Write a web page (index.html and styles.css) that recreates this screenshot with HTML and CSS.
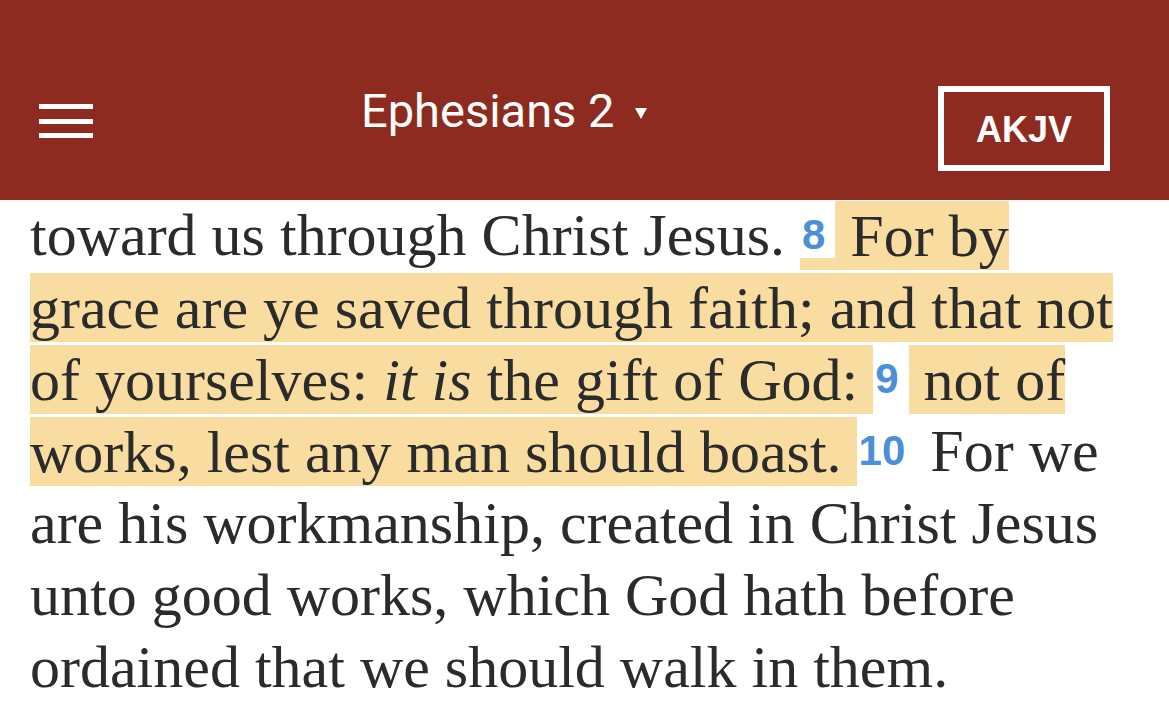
FILE: index.html
```html
<!DOCTYPE html>
<html>
<head>
<meta charset="utf-8">
<link rel="stylesheet" href="styles.css">
</head>
<body>
<header class="topbar">
  <div class="menu" aria-label="Menu">
    <span class="bar"></span>
    <span class="bar"></span>
    <span class="bar"></span>
  </div>
  <div class="title">Ephesians 2<span class="caret"></span></div>
  <div class="version">AKJV</div>
</header>
<main class="reader">
  <p class="passage">toward us through Christ Jesus. <span class="hl"><span class="vn">8</span> For by grace are ye saved through faith; and that not of yourselves: <i>it is</i> the gift of God: </span><span class="vn">9</span><span class="hl"> not of works, lest any man should boast. </span><span class="vn">10</span> For we are his workmanship, created in Christ Jesus unto good works, which God hath before ordained that we should walk in them.</p>
</main>
</body>
</html>
```

FILE: styles.css
```css
html, body {
  margin: 0;
  padding: 0;
  background: #ffffff;
  overflow: hidden;
}

.topbar {
  height: 200px;
  background: #8e2b21;
  display: flex;
  align-items: flex-start;
  position: relative;
  z-index: 2;
}

.menu {
  margin: 104px 0 0 39px;
  width: 54px;
  display: flex;
  flex-direction: column;
  gap: 9.5px;
}

.bar {
  display: block;
  height: 5px;
  background: #ffffff;
}

.title {
  margin: 84px 0 0 268px;
  font-family: Roboto, "Liberation Sans", sans-serif;
  font-size: 47px;
  line-height: 54px;
  color: #ffffff;
  display: flex;
  align-items: center;
}

.caret {
  width: 0;
  height: 0;
  margin: 4px 0 0 21px;
  border-left: 6px solid transparent;
  border-right: 6px solid transparent;
  border-top: 11px solid #ffffff;
}

.version {
  margin: 86px 59px 0 auto;
  box-sizing: border-box;
  width: 172px;
  height: 85px;
  border: 6px solid #ffffff;
  display: flex;
  align-items: center;
  justify-content: center;
  padding-top: 3px;
  font-family: "Liberation Sans", Arial, sans-serif;
  font-weight: bold;
  font-size: 36px;
  color: #ffffff;
}

.reader {
  margin-top: -1px;
  padding: 0 30px;
}

.passage {
  margin: 0;
  font-family: "Liberation Serif", "Times New Roman", serif;
  font-size: 60px;
  line-height: 72px;
  color: #2b2b2b;
}

.hl {
  background: #f8dca0;
  padding: 1.5px 0 2px;
}

.vn {
  font-family: "Liberation Sans", Arial, sans-serif;
  font-weight: bold;
  font-size: 42px;
  color: #4a8fd8;
  background: #ffffff;
  vertical-align: 6px;
  padding: 11px 10px 0 2px;
}
```
